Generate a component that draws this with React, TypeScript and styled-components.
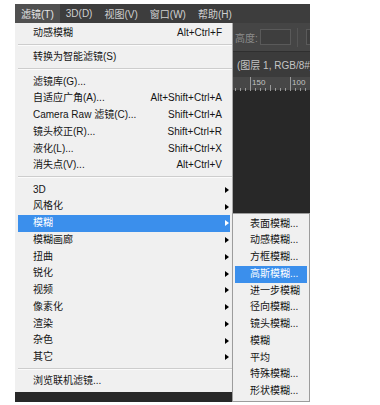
import React from 'react';
import styled, { createGlobalStyle } from 'styled-components';

const GlobalStyle = createGlobalStyle`
  html, body { margin: 0; padding: 0; background: #ffffff; }
  body { font-family: "Liberation Sans", "Noto Sans CJK SC", sans-serif; }
  * { box-sizing: border-box; }
`;

const FONT = `"Liberation Sans", "Noto Sans CJK SC", sans-serif`;

const Page = styled.div`
  padding: 4px 0 0 15px;
`;

const Screenshot = styled.div`
  position: relative;
  width: 295px;
  height: 398px;
  background: #282828;
  display: flex;
  flex-direction: column;
  overflow: hidden;
  font-family: ${FONT};
  font-size: 10px;
`;

const MenuBar = styled.div`
  height: 19px;
  flex: none;
  display: flex;
  align-items: stretch;
  background: #3d3d3d;
`;

const MenuBarItem = styled.div<{ $active?: boolean }>`
  display: flex;
  align-items: center;
  padding: 0 6px;
  color: ${(p) => (p.$active ? '#e6e6e6' : '#cfcfcf')};
  background: ${(p) => (p.$active ? '#505050' : 'transparent')};
  white-space: nowrap;
`;

const OptionsBar = styled.div`
  height: 29px;
  flex: none;
  display: flex;
  align-items: center;
  padding-left: 220px;
  background: #454545;
  border-bottom: 1px solid #2f2f2f;
`;

const OptionLabel = styled.span`
  color: #8c8c8c;
  white-space: nowrap;
  margin-right: 2px;
`;

const OptionInput = styled.div<{ $width: number }>`
  flex: none;
  width: ${(p) => p.$width}px;
  height: 16px;
  border: 1px solid #5a5a5a;
  background: #3e3e3e;
`;

const OptionDivider = styled.div`
  flex: none;
  width: 1px;
  height: 19px;
  background: #2c2c2c;
  border-right: 1px solid #555;
  margin: 0 8px 0 6px;
`;

const TabBar = styled.div`
  height: 25px;
  flex: none;
  display: flex;
  align-items: center;
  padding-left: 222px;
  background: #3b3b3b;
  color: #c4c4c4;
  white-space: nowrap;
`;

const RulerStrip = styled.div`
  height: 14px;
  flex: none;
  background: #474747;
  border-bottom: 1px solid #2a2a2a;
`;

const Canvas = styled.div`
  flex: 1;
  background: #282828;
`;

const MainMenu = styled.div`
  position: absolute;
  left: 0;
  top: 19px;
  width: 218px;
  height: 369px;
  background: #f0f0f0;
  border-right: 1px solid #a8a8a8;
  padding: 2px 0 2px;
  color: #141414;
`;

const SubMenu = styled.div`
  position: absolute;
  left: 217px;
  top: 208.7px;
  width: 78px;
  height: 189.5px;
  background: #f0f0f0;
  border: 1px solid #9c9c9c;
  padding: 2px 1px 0 1px;
  color: #141414;
  box-shadow: 1px 1px 2px rgba(0, 0, 0, 0.15);
`;

const Row = styled.div<{ $active?: boolean; $indent: number }>`
  height: 16.75px;
  line-height: 16.75px;
  display: grid;
  grid-template-columns: 1fr auto 8px;
  align-items: center;
  padding-left: ${(p) => p.$indent}px;
  margin: 0 2px 0 3px;
  white-space: nowrap;
  background: ${(p) => (p.$active ? '#3b8fec' : 'transparent')};
  color: ${(p) => (p.$active ? '#ffffff' : 'inherit')};
`;

const SubRow = styled(Row)`
  margin: 0 1px;
`;

const Shortcut = styled.span`
  text-align: right;
`;

const Arrow = styled.span<{ $active?: boolean }>`
  justify-self: end;
  margin-right: 1px;
  width: 0;
  height: 0;
  border-top: 3.5px solid transparent;
  border-bottom: 3.5px solid transparent;
  border-left: 4px solid ${(p) => (p.$active ? '#ffffff' : '#000000')};
`;

const Separator = styled.div`
  height: 7.5px;
  padding-top: 2px;
  margin: 0 0 0 3px;
  &::before {
    content: '';
    display: block;
    height: 1px;
    background: #cdcdcd;
    border-bottom: 1px solid #fbfbfb;
  }
`;

type Item =
  | { label: string; shortcut?: string; sub?: boolean; active?: boolean }
  | 'sep';

const mainItems: Item[] = [
  { label: '动感模糊', shortcut: 'Alt+Ctrl+F' },
  'sep',
  { label: '转换为智能滤镜(S)' },
  'sep',
  { label: '滤镜库(G)...' },
  { label: '自适应广角(A)...', shortcut: 'Alt+Shift+Ctrl+A' },
  { label: 'Camera Raw 滤镜(C)...', shortcut: 'Shift+Ctrl+A' },
  { label: '镜头校正(R)...', shortcut: 'Shift+Ctrl+R' },
  { label: '液化(L)...', shortcut: 'Shift+Ctrl+X' },
  { label: '消失点(V)...', shortcut: 'Alt+Ctrl+V' },
  'sep',
  { label: '3D', sub: true },
  { label: '风格化', sub: true },
  { label: '模糊', sub: true, active: true },
  { label: '模糊画廊', sub: true },
  { label: '扭曲', sub: true },
  { label: '锐化', sub: true },
  { label: '视频', sub: true },
  { label: '像素化', sub: true },
  { label: '渲染', sub: true },
  { label: '杂色', sub: true },
  { label: '其它', sub: true },
  'sep',
  { label: '浏览联机滤镜...' },
];

const subItems = [
  '表面模糊...',
  '动感模糊...',
  '方框模糊...',
  '高斯模糊...',
  '进一步模糊',
  '径向模糊...',
  '镜头模糊...',
  '模糊',
  '平均',
  '特殊模糊...',
  '形状模糊...',
];

const menuBarItems = ['滤镜(T)', '3D(D)', '视图(V)', '窗口(W)', '帮助(H)'];

function RulerTicks() {
  const ticks: React.ReactNode[] = [];
  for (let x = 200; x <= 295; x += 5) {
    const major = (x - 235) % 40 === 0;
    const mid = !major && (x - 235) % 20 === 0;
    const h = major ? 14 : mid ? 6 : 3;
    ticks.push(
      <line key={x} x1={x + 0.5} x2={x + 0.5} y1={14 - h} y2={14} stroke="#9a9a9a" strokeWidth={1} />
    );
  }
  return (
    <svg width="295" height="14" style={{ display: 'block' }}>
      {ticks}
      <text x="237" y="8" fill="#c2c2c2" fontSize="8" fontFamily="Liberation Sans, sans-serif">150</text>
      <text x="277" y="8" fill="#c2c2c2" fontSize="8" fontFamily="Liberation Sans, sans-serif">100</text>
    </svg>
  );
}

export default function App() {
  return (
    <>
      <GlobalStyle />
      <Page>
        <Screenshot>
          <MenuBar>
            {menuBarItems.map((m, i) => (
              <MenuBarItem key={m} $active={i === 0}>
                {m}
              </MenuBarItem>
            ))}
          </MenuBar>
          <OptionsBar>
            <OptionLabel>高度:</OptionLabel>
            <OptionInput $width={31} />
            <OptionDivider />
            <OptionInput $width={31} />
          </OptionsBar>
          <TabBar>(图层 1, RGB/8#)</TabBar>
          <RulerStrip>
            <RulerTicks />
          </RulerStrip>
          <Canvas />

          <MainMenu>
            {mainItems.map((it, i) =>
              it === 'sep' ? (
                <Separator key={i} />
              ) : (
                <Row key={i} $active={it.active} $indent={15}>
                  <span>{it.label}</span>
                  <Shortcut>{it.shortcut ?? ''}</Shortcut>
                  {it.sub ? <Arrow $active={it.active} /> : <span />}
                </Row>
              )
            )}
          </MainMenu>

          <SubMenu>
            {subItems.map((s, i) => (
              <SubRow key={s} $active={i === 3} $indent={15}>
                <span>{s}</span>
                <span />
                <span />
              </SubRow>
            ))}
          </SubMenu>
        </Screenshot>
      </Page>
    </>
  );
}
